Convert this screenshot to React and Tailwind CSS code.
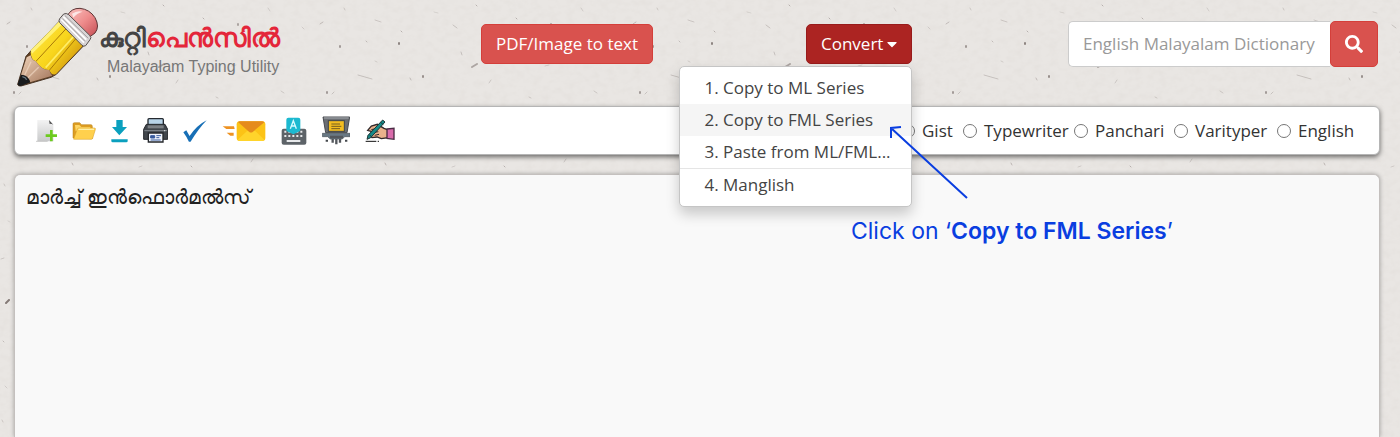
import { useState } from 'react';
import { FaCaretDown, FaSearch } from 'react-icons/fa';

const convertItems = [
  { id: 'ml', label: '1. Copy to ML Series' },
  { id: 'fml', label: '2. Copy to FML Series' },
  { id: 'paste', label: '3. Paste from ML/FML...' },
  { id: 'manglish', label: '4. Manglish', divided: true },
];

const layouts = [
  { id: 'gist', label: 'Gist', width: 'w-[62px]' },
  { id: 'typewriter', label: 'Typewriter', width: 'w-[111px]' },
  { id: 'panchari', label: 'Panchari', width: 'w-[100px]' },
  { id: 'varityper', label: 'Varityper', width: 'w-[103px]' },
  { id: 'english', label: 'English', width: 'w-[77px]' },
];

// x, y, length x, length y, opacity
const specks = [
  [7, 24, 3, -2, 0.4], [31, 8, 1, 2, 0.3], [62, 61, 2, 1, 0.25], [88, 31, 1, 1, 0.5], [121, 12, 4, 1, 0.2],
  [148, 52, 1, 3, 0.35], [176, 83, 2, -3, 0.3], [203, 18, 1, 1, 0.5], [232, 66, 4, -1, 0.25], [257, 39, 1, 2, 0.4],
  [281, 91, 3, 2, 0.3], [302, 27, 2, 2, 0.25], [19, 94, 2, -2, 0.35], [45, 132, 3, 1, 0.2], [72, 163, 1, 2, 0.45],
  [110, 119, 1, 1, 0.5], [139, 167, 3, -1, 0.25], [169, 141, 2, 3, 0.2], [191, 166, 1, 1, 0.5], [221, 128, 3, 2, 0.3],
  [251, 162, 2, -3, 0.3], [289, 152, 1, 2, 0.4], [306, 114, 4, 1, 0.25], [4, 184, 1, 2, 0.3], [8, 221, 2, 1, 0.2],
  [1, 259, 3, -1, 0.3], [6, 303, 3, -3, 1], [3, 341, 1, 1, 0.4], [5, 386, 2, 2, 0.25], [2, 420, 1, 2, 0.3],
  [97, 78, 1, 2, 0.4], [53, 41, 1, 1, 0.4], [216, 97, 2, 1, 0.3], [268, 8, 2, 3, 0.25], [163, 5, 1, 1, 0.5],
  [27, 46, 0, 1, 0.7], [62, 20, 6, 2, 0.3], [45, 75, 14, 4, 0.35], [86, 43, 0, 1, 0.9], [110, 76, 0, 1, 0.8],
  [159, 67, 5, -3, 0.6], [14, 92, 0, 1, 0.7], [238, 24, 0, 1, 0.6], [250, 41, 0, 1, 0.6], [140, 25, 4, 3, 0.35],
];

function PaperBackground() {
  return (
    <svg className="absolute inset-0 -z-10 h-full w-full" aria-hidden="true">
      <defs>
        <filter id="grain" x="0" y="0" width="100%" height="100%">
          <feTurbulence type="fractalNoise" baseFrequency="0.12 0.16" numOctaves="3" seed="4" />
          <feColorMatrix values="0 0 0 0 0.62  0 0 0 0 0.58  0 0 0 0 0.54  0.3 0 0 0 -0.12" />
        </filter>
        <pattern id="paper" width="313" height="440" patternUnits="userSpaceOnUse">
          {specks.map(([x, y, dx, dy, o]) => (
            <path key={`${x}-${y}`} d={`M${x} ${y}l${dx} ${dy}`} stroke="#6b5f5c" strokeWidth={o > 0.5 ? 2 : 1} strokeLinecap="round" opacity={o * 0.8} />
          ))}
        </pattern>
      </defs>
      <rect width="100%" height="100%" fill="#e9e6e3" />
      <rect width="100%" height="100%" filter="url(#grain)" />
      <rect width="100%" height="100%" fill="url(#paper)" />
    </svg>
  );
}

function PencilLogo() {
  return (
    <svg className="h-20 w-[82px] shrink-0" viewBox="50 20 246 240" aria-hidden="true">
      <defs>
        <linearGradient id="body" x1="0" y1="0" x2="1" y2="0.8">
          <stop offset="0" stopColor="#ffe94a" />
          <stop offset="0.55" stopColor="#f8d51c" />
          <stop offset="1" stopColor="#c98a0c" />
        </linearGradient>
        <linearGradient id="eraser" x1="0" y1="0" x2="1" y2="1">
          <stop offset="0" stopColor="#f9c3c0" />
          <stop offset="0.5" stopColor="#ee8c8c" />
          <stop offset="1" stopColor="#c24b52" />
        </linearGradient>
        <linearGradient id="wood" x1="0" y1="0" x2="1" y2="1">
          <stop offset="0" stopColor="#efd2b8" />
          <stop offset="1" stopColor="#a3765c" />
        </linearGradient>
      </defs>
      <path d="M93 150L77 168 52 252Q53 258 62 257L152 231 168 222 250 136 178 62Z" fill="#604022" stroke="#4a3526" strokeWidth="3" />
      <path d="M178 62L250 134 168 220Q155 229 147 209 126 211 106 183 91 178 91 154Z" fill="url(#body)" />
      <path d="M178 62L91 150 95 160 187 70Z" fill="#fff27a" />
      <path d="M202 80L106 184M229 112L147 210" fill="none" stroke="#a97908" strokeWidth="3" />
      <path d="M222 106L136 202" stroke="#ffee66" strokeWidth="5" />
      <path d="M91 165Q94 180 106 183 126 211 147 209 149 219 156 226L89 246Q88 230 62 224L79 171Z" fill="url(#wood)" />
      <path d="M92 184L72 226M115 201L82 233" stroke="#f6dfcb" strokeWidth="4" opacity="0.6" />
      <path d="M62 223Q84 224 90 246L61 257Q51 257 53 249Z" fill="#191b1d" />
      <path d="M66 229Q76 231 79 238" fill="none" stroke="#697780" strokeWidth="4" />
      <path d="M201 46Q213 23 239 24 268 27 284 52 299 79 284 98L265 112Z" fill="url(#eraser)" stroke="#5c3435" strokeWidth="3" />
      <path d="M215 40Q230 29 247 34 229 38 219 52Z" fill="#fff" opacity="0.7" />
      <path d="M178 55L190 41Q198 37 205 43L268 105Q275 112 269 118L256 136Q250 140 244 134L178 67Q174 61 178 55Z" fill="#d8d5d5" stroke="#58514f" strokeWidth="3" />
      <path d="M189 49L258 118M183 57L251 127" stroke="#fff" strokeWidth="5" />
      <path d="M194 46L264 114M186 55L254 123" stroke="#888184" strokeWidth="2" />
    </svg>
  );
}

function NewFileIcon() {
  return (
    <svg className="h-[24px] w-[21px]" viewBox="105 71 63 72">
      <defs>
        <linearGradient id="sheet" x1="0" y1="0" x2="0" y2="1">
          <stop offset="0" stopColor="#f3f3f3" />
          <stop offset="1" stopColor="#c9cacb" />
        </linearGradient>
      </defs>
      <path d="M109 74H144L157 88V138H109Z" fill="url(#sheet)" />
      <path d="M144 74L157 88Q150 83 146 86Z" fill="#4d4d4d" />
      <path d="M105 138H140" stroke="#b5b5b5" strokeWidth="2" />
      <path d="M151 104V138M134 121H168" stroke="#6ccb1e" strokeWidth="8" />
    </svg>
  );
}

function OpenFolderIcon() {
  return (
    <svg className="h-[24px] w-[24px]" viewBox="217 73 72 72">
      <path d="M220 130V88Q220 84 224 84H240L246 90H274Q278 90 278 95V132Z" fill="#dd9d22" stroke="#b67c14" strokeWidth="1.5" />
      <path d="M226 91H239L245 97H272V110H228Z" fill="#ffd766" />
      <path d="M222 133L233 103Q234 100 238 100H284Q289 100 287 105L279 131Q278 134 274 134H224Q221 134 222 133Z" fill="#ffd04d" stroke="#d39a23" strokeWidth="1.5" />
      <path d="M236 104H283" stroke="#fff0a8" strokeWidth="4" />
    </svg>
  );
}

function DownloadIcon() {
  return (
    <svg className="h-[24px] w-[17px]" viewBox="331 73 51 72">
      <path d="M347 76H366V97H379L356 122 334 97H347Z" fill="#0ba0be" />
      <path d="M332 134H381V139Q381 143 377 143H336Q332 143 332 139Z" fill="#0ba0be" />
    </svg>
  );
}

function PrinterIcon() {
  return (
    <svg className="h-[25px] w-[25px]" viewBox="427 70 75 75">
      <rect x="442" y="72" width="46" height="28" rx="3" fill="#b8d4e8" stroke="#252a30" strokeWidth="4" />
      <path d="M437 89H493L501 104V134H429V104Z" fill="#41464c" stroke="#24272b" strokeWidth="3" />
      <path d="M441 92H489V101H441Z" fill="#7c8084" />
      <path d="M431 108H499" stroke="#858b91" strokeWidth="3" />
      <path d="M443 115H487V142H443Z" fill="#f0f4fc" stroke="#24272b" strokeWidth="4" />
      <path d="M450 123H462V130H450ZM467 123H481M467 129H476M450 136H480" fill="#375a9d" stroke="#375a9d" strokeWidth="3" />
      <circle cx="492" cy="108" r="2" fill="#e4e7e9" />
    </svg>
  );
}

function CheckIcon() {
  return (
    <svg className="h-[24px] w-[24px]" viewBox="548 69 73 72">
      <path d="M549 109L558 103 568 120Q590 87 620 72 593 100 571 138H566Q558 121 549 109Z" fill="#176fb6" />
    </svg>
  );
}

function MailIcon() {
  return (
    <svg className="h-[22px] w-[44px]" viewBox="36 73 132 66">
      <rect x="80" y="77" width="86" height="59" rx="9" fill="#fcc316" />
      <path d="M83 132L112 105H135L163 132Q160 136 157 136H89Q85 136 83 132Z" fill="#ffd42b" />
      <path d="M84 79Q86 77 90 77H156Q161 77 163 80L129 108Q123 113 117 108Z" fill="#e58b1c" />
      <path d="M38 92H72L74 100H49ZM50 111H71V120H61Z" fill="#ee9221" />
    </svg>
  );
}

function KeyboardIcon() {
  return (
    <svg className="h-[28px] w-[26px]" viewBox="215 64 78 84">
      <rect x="217" y="99" width="74" height="48" rx="6" fill="#5d6368" />
      <path d="M225 108H284M225 121H284" stroke="#e7e9eb" strokeWidth="6" strokeDasharray="6 6" />
      <path d="M232 136H273" stroke="#e7e9eb" strokeWidth="6" />
      <path d="M237 66H267Q273 66 273 72V102Q273 107 268 108L252 116 236 108Q231 107 231 102V72Q231 66 237 66Z" fill="#1cb9d0" />
      <path d="M243 99L252 75 261 99M246 91H258" fill="none" stroke="#d7faff" strokeWidth="4" />
    </svg>
  );
}

function TypewriterIcon() {
  return (
    <svg className="h-[29px] w-[28px]" viewBox="336 62 84 87">
      <path d="M339 65H419L411 112H347Z" fill="#6b6e73" stroke="#484b50" strokeWidth="3" />
      <path d="M342 68H416" stroke="#8f9398" strokeWidth="5" />
      <rect x="355" y="76" width="48" height="32" fill="#f3bd20" stroke="#3e454c" strokeWidth="3" />
      <path d="M364 86H390M364 93H394M364 100H390" stroke="#735c21" strokeWidth="3" />
      <path d="M337 114H420V124H404L397 131H361L353 124H337Z" fill="#687884" stroke="#4c5359" strokeWidth="2" />
      <path d="M360 125H399M368 131V142M379 131V147M390 131V142" stroke="#53575c" strokeWidth="7" />
      <path d="M347 136H354M405 136H412" stroke="#454a4e" strokeWidth="6" />
    </svg>
  );
}

function WritingHandIcon() {
  return (
    <svg className="h-[24px] w-[30px]" viewBox="466 70 90 72">
      <path d="M474 104L485 91 503 86 523 98 535 103V126L515 129 502 124 487 126 479 119 487 108Z" fill="#eab28c" stroke="#30282a" strokeWidth="4" />
      <path d="M485 102L500 98M491 111L506 108M495 119L508 116" stroke="#30282a" strokeWidth="3" />
      <path d="M532 100L553 98V131L532 128Z" fill="#d96bab" stroke="#4a2b43" strokeWidth="4" />
      <path d="M519 73L526 79 483 126 472 131 475 119Z" fill="#168b89" stroke="#203536" strokeWidth="3" />
      <path d="M513 80L521 87M479 117L486 124" stroke="#183c3e" strokeWidth="3" />
      <path d="M468 137H500M504 137H508" stroke="#111" strokeWidth="3" />
    </svg>
  );
}

const tools = [
  { label: 'New', icon: NewFileIcon },
  { label: 'Open', icon: OpenFolderIcon },
  { label: 'Download', icon: DownloadIcon },
  { label: 'Print', icon: PrinterIcon },
  { label: 'Spell check', icon: CheckIcon },
  { label: 'Send mail', icon: MailIcon },
  { label: 'Keyboard', icon: KeyboardIcon },
  { label: 'Typewriter', icon: TypewriterIcon },
  { label: 'Handwriting', icon: WritingHandIcon },
];

function ConvertMenu() {
  return (
    <div className="relative w-fit">
      <button
        type="button"
        aria-expanded="true"
        className="flex h-10 items-center gap-1 rounded-[5px] border border-[#981b1b] bg-[#ac2422] px-[14px] text-[17px] text-white"
      >
        Convert
        <FaCaretDown className="h-4 w-[10px]" />
      </button>
      <ul className="absolute right-0 top-full z-20 mt-[2px] w-[233px] rounded-[5px] border border-[#c5c5c5] bg-white py-[5px] shadow-[0_7px_14px_rgba(0,0,0,0.2)]">
        {convertItems.map((item) => (
          <li key={item.id} className={item.divided ? 'border-t border-[#e5e5e5]' : ''}>
            <button
              type="button"
              className={`block h-8 w-full whitespace-nowrap pl-6 text-left text-[17px] text-[#444] ${
                item.id === 'fml' ? 'bg-[#f5f5f5]' : ''
              }`}
            >
              {item.label}
            </button>
          </li>
        ))}
      </ul>

      {/* Hint for the highlighted entry */}
      <div className="pointer-events-none absolute left-[45px] top-[101px] z-30 w-max text-[#0a3ee0]">
        <svg className="ml-[38px] h-[74px] w-[80px]" viewBox="0 0 80 74" fill="none" stroke="currentColor" strokeWidth="2">
          <path d="M78 73L2 3M2 13V3L12 2" />
        </svg>
        <p className="mt-4 font-['Inter',sans-serif] text-[23px] leading-8">
          Click on ‘<span className="font-semibold">Copy to FML Series</span>’
        </p>
      </div>
    </div>
  );
}

export default function App() {
  const [layout, setLayout] = useState('');
  const [text, setText] = useState('മാർച്ച് ഇൻഫൊർമൽസ്');

  return (
    <div className="relative isolate flex h-screen flex-col overflow-hidden pl-[14px] pr-5 font-['Open_Sans','Noto_Sans',sans-serif] text-[#333]">
      <PaperBackground />

      <header className="grid h-[106px] shrink-0 grid-cols-[467fr_325fr_262fr_310fr] items-start pr-[2px]">
        <a href="#" className="flex w-fit pl-[3px] pt-[7px]">
          <PencilLogo />
          <span className="flex flex-col whitespace-nowrap pt-3">
            <span className="text-[26px] font-bold leading-9 text-[#444]">
              കുറ്റി<span className="text-[#e4263a]">പെൻസിൽ</span>
            </span>
            <span className="pl-2 font-['Liberation_Sans',sans-serif] text-[16px] leading-6 text-[#777]">
              Malayalam Typing Utility
            </span>
          </span>
        </a>
        <button
          type="button"
          className="mt-6 h-10 w-fit whitespace-nowrap rounded-[5px] border border-[#d43f3a] bg-[#d9524e] px-[14px] text-[17px] text-white"
        >
          PDF/Image to text
        </button>
        <div className="pt-6">
          <ConvertMenu />
        </div>
        <form className="mt-[21px] flex h-[46px]" onSubmit={(e) => e.preventDefault()}>
          <input
            type="text"
            aria-label="English Malayalam Dictionary"
            placeholder="English Malayalam Dictionary"
            className="min-w-0 flex-1 rounded-l-[5px] border border-r-0 border-[#ccc] bg-white px-[14px] text-[17px] outline-none placeholder:text-[#999]"
          />
          <button
            type="submit"
            aria-label="Search"
            className="flex w-12 items-center justify-center rounded-[5px] border border-[#d43f3a] bg-[#d9524e] text-white"
          >
            <FaSearch className="h-[18px] w-[18px]" />
          </button>
        </form>
      </header>

      <section className="flex h-[49px] shrink-0 items-center justify-between rounded-[6px] border border-[#b5b5b5] bg-white pl-[21px] pr-[25px] shadow-[0_2px_5px_rgba(0,0,0,0.55)]">
        <div className="flex items-center gap-[15px]">
          {tools.map((tool) => (
            <button key={tool.label} type="button" aria-label={tool.label}>
              <tool.icon />
            </button>
          ))}
        </div>
        <div className="flex items-center">
          {layouts.map((item) => (
            <label key={item.id} className={`flex items-center gap-[7px] whitespace-nowrap text-[17px] ${item.width}`}>
              <input
                type="radio"
                name="layout"
                value={item.id}
                checked={layout === item.id}
                onChange={() => setLayout(item.id)}
                className="h-[14px] w-[14px] shrink-0"
              />
              {item.label}
            </label>
          ))}
        </div>
      </section>

      <textarea
        aria-label="Editor"
        value={text}
        onChange={(e) => setText(e.target.value)}
        spellCheck={false}
        className="mt-[19px] w-full flex-1 resize-none rounded-t-[6px] border border-b-0 border-[#c4c0be] bg-[#f9f9f9] px-[11px] py-2 text-[20px] leading-7 text-[#222] shadow-[0_0_4px_rgba(0,0,0,0.3)] outline-none"
      />
    </div>
  );
}
